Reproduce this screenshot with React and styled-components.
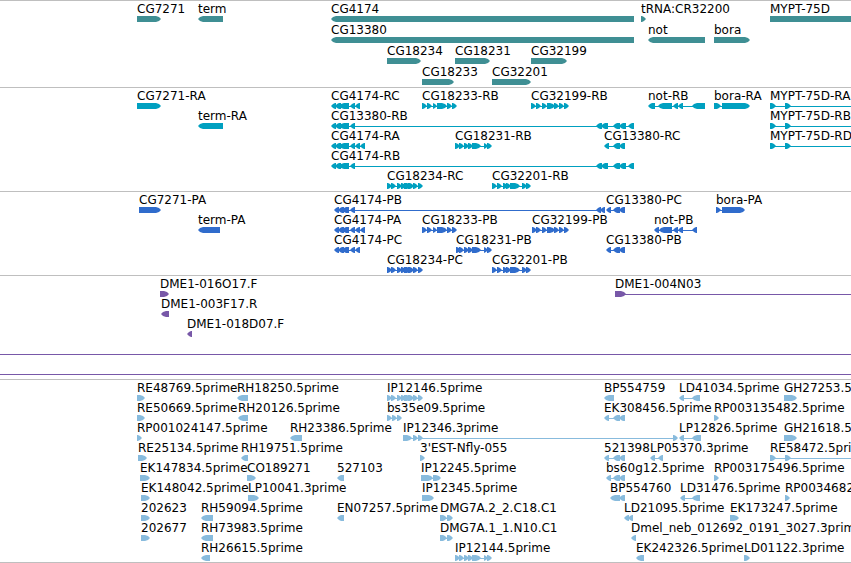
import React from 'react'
import styled, { createGlobalStyle } from 'styled-components'

// exon patterns shared by several transcripts, [start, end] on the ruler
const LEFT_A = [[331, 336], [335, 341], [339, 349], [350, 355]]
const LEFT_B = [[334, 339], [338, 344], [342, 349], [350, 355]]
const FAR_A = [[596, 602], [601, 608], [613, 620], [619, 626], [628, 634]]
const X13380 = [[604, 609], [613, 620], [619, 625]]
const X13380P = [[606, 611], [613, 620], [619, 625]]
const X18233 = [[422, 427], [427, 432], [433, 437], [437, 447], [447, 452], [452, 457]]
const X32199 = [[531, 536], [536, 541], [542, 547], [547, 555], [554, 559], [559, 564], [564, 569]]
const X18231 = [[455, 460], [459, 464], [464, 469], [468, 473], [472, 481], [484, 488], [487, 492]]
const X18234 = [[387, 392], [391, 396], [397, 402], [401, 406], [404, 411], [408, 414], [413, 418], [418, 423]]
const X32201 = [[492, 497], [497, 502], [503, 508], [506, 511], [510, 520], [522, 527], [526, 531]]
const MYPT = [[770, 776], [785, 791], [900, 910]]

const r = (name, ...exons) => ({ name, exons, dir: 'right' })
const l = (name, ...exons) => ({ name, exons, dir: 'left' })
const span = { full: true }

const tracks = [
  {
    id: 'genes',
    color: '#3f8f94',
    gap: 1,
    lanes: [
      [r('CG7271', [137, 161]), l('term', [198, 223]), l('CG4174', [331, 634]), r('tRNA:CR32200', [641, 646]), r('MYPT-75D', [770, 910])],
      [l('CG13380', [331, 634]), l('not', [648, 705]), r('bora', [714, 750])],
      [r('CG18234', [387, 421]), r('CG18231', [455, 490]), r('CG32199', [531, 567])],
      [r('CG18233', [422, 454]), r('CG32201', [492, 531])],
    ],
  },
  {
    id: 'transcripts',
    color: '#00a0c0',
    lanes: [
      [
        r('CG7271-RA', [137, 161]),
        l('CG4174-RC', ...LEFT_A, [355, 360]),
        r('CG18233-RB', ...X18233),
        r('CG32199-RB', ...X32199),
        l('not-RB', [648, 655], [658, 672], [673, 678], [678, 683], [692, 705]),
        r('bora-RA', [714, 721], [722, 750]),
        r('MYPT-75D-RA', ...MYPT),
      ],
      [l('term-RA', [198, 223]), l('CG13380-RB', ...LEFT_A, ...FAR_A), r('MYPT-75D-RB', ...MYPT)],
      [l('CG4174-RA', ...LEFT_A, [355, 360], [360, 365]), r('CG18231-RB', ...X18231), l('CG13380-RC', ...X13380), r('MYPT-75D-RD', ...MYPT)],
      [l('CG4174-RB', ...LEFT_A, ...FAR_A)],
      [r('CG18234-RC', ...X18234), r('CG32201-RB', ...X32201)],
    ],
  },
  {
    id: 'proteins',
    color: '#306ccc',
    lanes: [
      [
        r('CG7271-PA', [139, 161]),
        l('CG4174-PB', ...LEFT_B, [596, 601], [600, 605]),
        l('CG13380-PC', ...X13380P),
        r('bora-PA', [716, 721], [722, 745]),
      ],
      [
        l('term-PA', [198, 220]),
        l('CG4174-PA', ...LEFT_B, [355, 360], [360, 365]),
        r('CG18233-PB', ...X18233),
        r('CG32199-PB', [532, 537], ...X32199.slice(1)),
        l('not-PB', [654, 659], [659, 672], [673, 678], [678, 683], [692, 697]),
      ],
      [l('CG4174-PC', ...LEFT_B, [355, 360]), r('CG18231-PB', [456, 461], ...X18231.slice(1)), l('CG13380-PB', ...X13380P)],
      [r('CG18234-PC', ...X18234), r('CG32201-PB', ...X32201)],
    ],
  },
  {
    id: 'bacs',
    color: '#7858a8',
    lanes: [
      [r('DME1-016O17.F', [160, 169]), r('DME1-004N03', [615, 626], [900, 910])],
      [l('DME1-003F17.R', [161, 169])],
      [l('DME1-018D07.F', [187, 192])],
      [span],
      [span],
    ],
  },
  {
    id: 'ests',
    color: '#88bbdd',
    lanes: [
      [
        r('RE48769.5prime', [137, 145]),
        l('RH18250.5prime', [237, 248]),
        r('IP12146.5prime', ...X18234),
        l('BP554759', [604, 614]),
        l('LD41034.5prime', [679, 684], [692, 700]),
        r('GH27253.5prime', [784, 797]),
      ],
      [
        r('RE50669.5prime', [137, 145]),
        l('RH20126.5prime', [238, 248]),
        r('bs35e09.5prime', [387, 392], [392, 397], [397, 402]),
        l('EK308456.5prime', ...X13380),
        r('RP003135482.5prime', [714, 719]),
      ],
      [
        r('RP001024147.5prime', [137, 142]),
        l('RH23386.5prime', [290, 302]),
        r('IP12346.3prime', [403, 412], [413, 418], [418, 423], [673, 678]),
        l('LP12826.5prime', [679, 684], [692, 701]),
        r('GH21618.5prime', [784, 797]),
      ],
      [
        r('RE25134.5prime', [138, 147]),
        l('RH19751.5prime', [241, 248]),
        r("3'EST-Nfly-055", [420, 425]),
        l('521398', ...X13380),
        l('LP05370.3prime', [650, 655], [658, 663]),
        r('RE58472.5prime', ...MYPT),
      ],
      [
        r('EK147834.5prime', [140, 150]),
        r('CO189271', [247, 256]),
        l('527103', [337, 344]),
        r('IP12245.5prime', [421, 433], [433, 441]),
        l('bs60g12.5prime', ...X13380P),
        r('RP003175496.5prime', [714, 719]),
      ],
      [
        r('EK148042.5prime', [141, 150]),
        r('LP10041.3prime', [248, 259]),
        r('IP12345.5prime', [422, 434]),
        l('BP554760', [610, 620], [619, 625]),
        l('LD31476.5prime', [680, 685], [692, 700]),
        r('RP003468272.5prime', [785, 790]),
      ],
      [
        r('202623', [141, 150]),
        l('RH59094.5prime', [201, 213]),
        l('EN07257.5prime', [337, 344]),
        r('DMG7A.2_2.C18.C1', [440, 447], [447, 453]),
        l('LD21095.5prime', [624, 629], [628, 633]),
        r('EK173247.5prime', [730, 739]),
      ],
      [
        r('202677', [141, 150]),
        l('RH73983.5prime', [201, 213]),
        r('DMG7A.1_1.N10.C1', [440, 447], [447, 453]),
        l('Dmel_neb_012692_0191_3027.3prime', [631, 636]),
      ],
      [
        l('RH26615.5prime', [201, 210]),
        r('IP12144.5prime', ...X18231),
        l('EK242326.5prime', [636, 644]),
        r('LD01122.3prime', [744, 750]),
      ],
    ],
  },
]

// a block with a slightly rounded arrow head, short exons keep a 1px back
function exonPoints(from, to, dir) {
  const long = to - from > 7
  const head = long ? 5 : 4
  const [tip, back, step] = dir === 'left' ? [from, to, 1] : [to, from, -1]
  return [
    [tip, 3],
    [tip + step * 2, 1],
    [tip + step * head, 0],
    [back, 0],
    [back, 6],
    [tip + step * head, 6],
    [tip + step * 2, 5],
  ].join(' ')
}

function Feature({ name, exons, dir }) {
  const start = exons[0][0]
  const width = exons[exons.length - 1][1] - start

  return (
    <FeatureBox style={{ left: start }}>
      <Label>{name}</Label>
      <Glyph width={width} height="6" viewBox={`0 0 ${width} 6`} aria-hidden="true">
        {exons.length > 1 && <rect x="2" y="3" width={width - 4} height="1" />}
        {exons.map(([from, to]) => (
          <polygon key={from} points={exonPoints(from - start, to - start, dir)} />
        ))}
      </Glyph>
    </FeatureBox>
  )
}

function App() {
  return (
    <>
      <GlobalStyle />
      <Browser>
        {tracks.map((track) => (
          <Track key={track.id} $color={track.color} $gap={track.gap}>
            {track.lanes.map((lane, i) => (
              <Lane key={i}>
                {lane.map((item) => (item.full ? <FullSpan key="span" /> : <Feature key={item.name} {...item} />))}
              </Lane>
            ))}
          </Track>
        ))}
      </Browser>
    </>
  )
}

export default App

const GlobalStyle = createGlobalStyle`
body {
    margin: 0;
    background: #fff;
}
`

const Browser = styled.main`
width: 100%;
overflow: hidden;
font-family: "DejaVu Sans", sans-serif;
font-size: 12px;
line-height: 17px;
color: #000;
`

const Track = styled.section`
display: flex;
flex-direction: column;
gap: ${props => props.$gap || 0}px;
padding-bottom: 3px;
border-top: 1px solid #bfbfbf;
color: ${props => props.$color};

&:last-child {
    padding-bottom: 2px;
    border-bottom: 1px solid #bfbfbf;
}
`

const Lane = styled.div`
position: relative;
height: 20px;
`

/* a feature sits at its coordinate on the sequence */
const FeatureBox = styled.div`
position: absolute;
top: 0;
display: flex;
flex-direction: column;
align-items: flex-start;
`

const Label = styled.span`
height: 15px;
color: #000;
white-space: nowrap;
`

const Glyph = styled.svg`
display: block;
flex: none;
fill: currentColor;
`

const FullSpan = styled.div`
height: 1px;
margin-top: 18px;
background: currentColor;
`
